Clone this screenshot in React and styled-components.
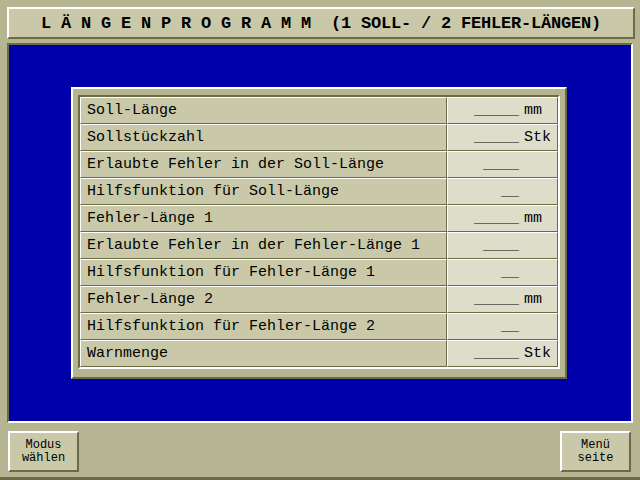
import React from "react";
import styled, { createGlobalStyle } from "styled-components";

const GlobalStyle = createGlobalStyle`
  html, body {
    margin: 0;
    padding: 0;
    background: #b5b592;
  }
  #root {
    width: 640px;
    height: 480px;
  }
`;

const Screen = styled.div`
  box-sizing: border-box;
  width: 640px;
  height: 480px;
  display: flex;
  flex-direction: column;
  gap: 4px;
  padding: 7px 7px 5px 7px;
  background: #b5b592;
  border-bottom: 3px solid #6b6b47;
  font-family: "Liberation Mono", "DejaVu Sans Mono", monospace;
  color: #000;
`;

const TitleBar = styled.div`
  box-sizing: border-box;
  height: 32px;
  margin-right: -2px;
  display: flex;
  align-items: center;
  justify-content: center;
  background: #c9c9a9;
  border: 2px solid;
  border-color: #ffffff #6b6b47 #6b6b47 #ffffff;
  font-size: 17px;
  font-weight: bold;
  letter-spacing: -0.2px;
  white-space: pre;
`;

const Workspace = styled.div`
  box-sizing: border-box;
  height: 380px;
  display: flex;
  align-items: center;
  justify-content: center;
  background: #0000aa;
  border: 2px solid;
  border-color: #6b6b47 #ffffff #ffffff #6b6b47;
`;

const Panel = styled.div`
  box-sizing: border-box;
  width: 496px;
  height: 292px;
  margin-right: 2px;
  padding: 6px 5px 8px 5px;
  background: #b5b592;
  border: 2px solid;
  border-color: #ffffff #6b6b47 #6b6b47 #ffffff;
`;

const Table = styled.div`
  display: grid;
  grid-template-columns: 367px 111px;
  grid-auto-rows: 27px;
  border: 2px solid;
  border-color: #6b6b47 #ffffff #ffffff #6b6b47;
`;

const Cell = styled.div`
  box-sizing: border-box;
  display: flex;
  align-items: center;
  border: 1px solid;
  border-color: #ffffff #6b6b47 #6b6b47 #ffffff;
  background: ${(p) => (p.$value ? "#ddddc9" : "#c9c9a9")};
  font-size: 15px;
  white-space: pre;
`;

const Label = styled(Cell)`
  padding-left: 6px;
`;

const Blank = styled.span`
  width: 71px;
  text-align: right;
`;

const Unit = styled.span`
  margin-left: 5px;
`;

const ButtonRow = styled.div`
  display: flex;
  justify-content: space-between;
  margin-top: 4px;
  padding: 0 2px 0 1px;
`;

const Button = styled.div`
  box-sizing: border-box;
  width: 71px;
  height: 41px;
  display: flex;
  flex-direction: column;
  align-items: center;
  justify-content: center;
  background: #c9c9a9;
  border: 2px solid;
  border-color: #ffffff #6b6b47 #6b6b47 #ffffff;
  font-size: 12px;
  line-height: 13px;
`;

const rows = [
  ["Soll-Länge", "_____", "mm"],
  ["Sollstückzahl", "_____", "Stk"],
  ["Erlaubte Fehler in der Soll-Länge", "____", ""],
  ["Hilfsfunktion für Soll-Länge", "__", ""],
  ["Fehler-Länge 1", "_____", "mm"],
  ["Erlaubte Fehler in der Fehler-Länge 1", "____", ""],
  ["Hilfsfunktion für Fehler-Länge 1", "__", ""],
  ["Fehler-Länge 2", "_____", "mm"],
  ["Hilfsfunktion für Fehler-Länge 2", "__", ""],
  ["Warnmenge", "_____", "Stk"],
];

export default function App() {
  return (
    <>
      <GlobalStyle />
      <Screen>
        <TitleBar>L Ä N G E N P R O G R A M M  (1 SOLL- / 2 FEHLER-LÄNGEN)</TitleBar>
        <Workspace>
          <Panel>
            <Table>
              {rows.map(([label, blank, unit]) => (
                <React.Fragment key={label}>
                  <Label>{label}</Label>
                  <Cell $value>
                    <Blank>{blank}</Blank>
                    <Unit>{unit}</Unit>
                  </Cell>
                </React.Fragment>
              ))}
            </Table>
          </Panel>
        </Workspace>
        <ButtonRow>
          <Button>
            <span>Modus</span>
            <span>wählen</span>
          </Button>
          <Button>
            <span>Menü</span>
            <span>seite</span>
          </Button>
        </ButtonRow>
      </Screen>
    </>
  );
}
